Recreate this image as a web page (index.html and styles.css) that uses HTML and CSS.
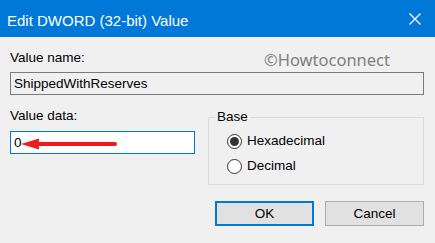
FILE: index.html
```html
<!DOCTYPE html>
<html lang="en">
<head>
  <meta charset="UTF-8" />
  <title>Edit DWORD (32-bit) Value</title>
  <link rel="stylesheet" href="styles.css">
</head>
<body>
  <div class="dialog">
    <div class="titlebar">
      <span class="title">Edit DWORD (32-bit) Value</span>
      <svg class="close-btn" width="12" height="12" viewBox="0 0 12 12">
        <path d="M0.5 0.5 L11.5 11.5 M11.5 0.5 L0.5 11.5" stroke="#fff" stroke-width="1.2" fill="none" />
      </svg>
    </div>

    <div class="dlg-body">
      <div class="watermark">&copy;Howtoconnect</div>

      <div class="field-label">Value name:</div>
      <div class="textbox readonly">ShippedWithReserves</div>

      <div class="mid-row">
        <div class="data-col">
          <div class="field-label data-label">Value data:</div>
          <div class="textbox focused">
            0
            <svg class="arrow" width="100" height="14" viewBox="0 0 100 14">
              <path d="M0 7 L18 1.5 L18 12.5 Z" fill="#ee1c1c" />
              <line x1="16" y1="7" x2="94" y2="7" stroke="#ee1c1c" stroke-width="4" stroke-linecap="round" />
            </svg>
          </div>
        </div>

        <fieldset class="base-group">
          <legend>Base</legend>
          <div class="radios">
            <div class="radio-row"><span class="radio checked"></span>Hexadecimal</div>
            <div class="radio-row"><span class="radio"></span>Decimal</div>
          </div>
        </fieldset>
      </div>

      <div class="buttons">
        <button class="btn default">OK</button>
        <button class="btn">Cancel</button>
      </div>
    </div>
  </div>
</body>
</html>
```

FILE: styles.css
```css
/* ——— Windows 10 style dialog ——— */
body { margin: 0; background: #f0f0f0; font-family: "Liberation Sans", Arial, sans-serif; color: #000; }
.dialog { width: 435px; height: 243px; display: flex; flex-direction: column; background: #f0f0f0; }

.titlebar { height: 37px; box-sizing: border-box; background: #0078d7; display: flex; align-items: flex-start; justify-content: space-between; padding: 12px 14px 0 7px; }
.title { color: #fff; font-size: 15px; line-height: 18px; }
.close-btn { margin-top: 1px; }

.dlg-body { position: relative; padding: 13px 11px 0 10px; font-size: 13.5px; }
.watermark { position: absolute; left: 264px; top: 13px; font-family: "Noto Sans", sans-serif; font-size: 16.5px; line-height: 20px; color: #7f7f7f; }

.field-label { line-height: 16px; }
.textbox { height: 23px; box-sizing: border-box; margin-top: 6px; padding: 0 3px; line-height: 21px; position: relative; }
.textbox.readonly { border: 1px solid #7a7a7a; background: #f0f0f0; }
.textbox.focused { border: 1px solid #0078d7; background: #fff; width: 185px; margin-top: 7px; }
.arrow { position: absolute; left: 10px; top: 5px; }

.mid-row { display: flex; align-items: flex-start; gap: 13px; }
.data-label { margin-top: 13px; }

.base-group { margin: 14px 0 0; padding: 0; border: 1px solid #dcdcdc; width: 216px; box-sizing: border-box; height: 76px; }
.base-group legend { margin-left: 6px; padding: 0 2px; line-height: 16px; }
.radios { padding: 8px 0 0 18px; display: flex; flex-direction: column; gap: 9px; }
.radio-row { display: flex; align-items: center; line-height: 16px; gap: 5px; }
.radio { width: 15px; height: 15px; box-sizing: border-box; border: 1px solid #333; border-radius: 50%; background: #fff; display: flex; align-items: center; justify-content: center; }
.radio.checked::after { content: ""; width: 9px; height: 9px; border-radius: 50%; background: #333; }

.buttons { display: flex; justify-content: flex-end; gap: 11px; margin-top: 16px; }
.btn { width: 99px; height: 25px; box-sizing: border-box; background: #e1e1e1; border: 1px solid #adadad; font-family: inherit; font-size: 13.5px; color: #000; padding: 0; }
.btn.default { border: 2px solid #0078d7; }
```
